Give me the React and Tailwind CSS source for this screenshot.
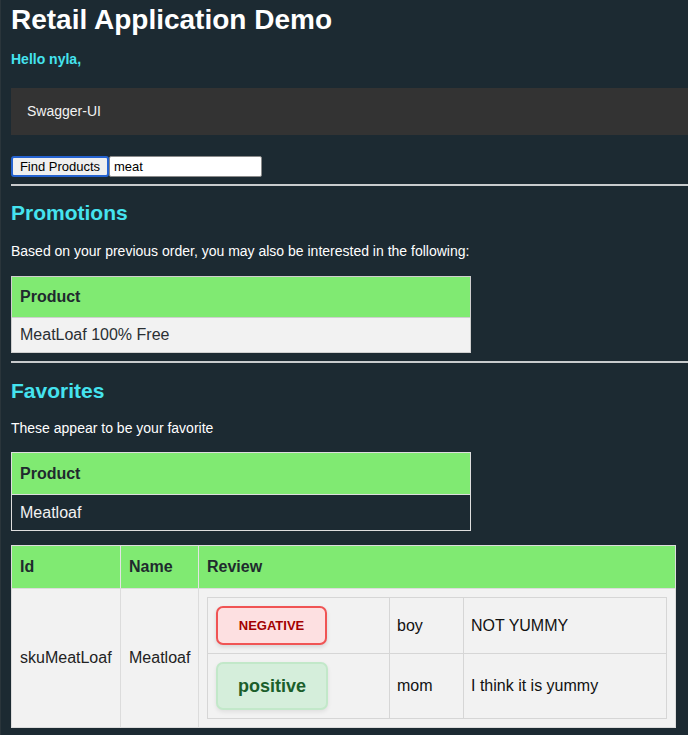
import React, { useState } from 'react';

const green = 'bg-[#80ea72]';

function Badge({ kind }) {
  if (kind === 'negative') {
    return (
      <div className="w-[111px] h-[39px] flex items-center justify-center rounded-[7px] border-2 border-[#f05454] bg-[#fde0e1] text-[#a30000] text-[13px] font-bold shadow-[0_2px_4px_rgba(0,0,0,0.12)]">
        NEGATIVE
      </div>
    );
  }
  return (
    <div className="w-[112px] h-[48px] flex items-center justify-center rounded-[7px] border-2 border-[#c2e8c9] bg-[#d5eedb] text-[#1b5e2b] text-[18px] font-bold shadow-[0_2px_4px_rgba(0,0,0,0.08)]">
      positive
    </div>
  );
}

export default function App() {
  const [query, setQuery] = useState('meat');

  const reviews = [
    { sentiment: 'negative', user: 'boy', text: 'NOT YUMMY', h: 'h-[55px]' },
    { sentiment: 'positive', user: 'mom', text: 'I think it is yummy', h: 'h-[65px]' }
  ];

  return (
    <div className="min-h-screen bg-[#1c2a32] border-l border-[#2a353b] pl-[10px] text-white font-['Liberation_Sans',Arial,sans-serif]">
      <h1 className="pt-[4px] text-[28px] leading-[32px] font-bold text-white">Retail Application Demo</h1>
      <div className="mt-[15px] text-[14px] leading-[16px] font-bold text-[#45e3ef]">Hello nyla,</div>

      <div className="mt-[21px] h-[47px] bg-[#333333] flex items-center pl-[16px] text-[14px] text-[#f2f2f2]">
        Swagger-UI
      </div>

      <div className="mt-[21px] h-[21px] flex">
        <button className="h-[21px] w-[98px] bg-[#efefef] border-2 border-[#2563d1] rounded-[3px] text-[13px] leading-none text-black">
          Find Products
        </button>
        <input
          value={query}
          onChange={e => setQuery(e.target.value)}
          className="h-[21px] w-[153px] bg-white border border-[#8a8a8a] rounded-[2px] px-[4px] text-[13px] text-black outline-none"
        />
      </div>

      <div className="mt-[7px] h-[2px] bg-[#c8cbcd]" />

      <h2 className="mt-[15px] text-[21px] leading-[24px] font-bold text-[#45e3ef]">Promotions</h2>
      <p className="mt-[18px] text-[14px] leading-[16px]">Based on your previous order, you may also be interested in the following:</p>

      <div className="mt-[17px] w-[460px] border border-[#cfcfcf]">
        <div className={`h-[41px] ${green} flex items-center px-[8px] border-b border-[#cfcfcf] text-[16px] font-bold text-[#1f2a2e]`}>Product</div>
        <div className="h-[34px] bg-[#f2f2f2] flex items-center px-[8px] text-[16px] text-[#2a2f33]">MeatLoaf 100% Free</div>
      </div>

      <div className="mt-[8px] h-[2px] bg-[#c8cbcd]" />

      <h2 className="mt-[16px] text-[21px] leading-[24px] font-bold text-[#45e3ef]">Favorites</h2>
      <p className="mt-[17px] text-[14px] leading-[16px]">These appear to be your favorite</p>

      <div className="mt-[16px] w-[460px] border border-[#dedede]">
        <div className={`h-[42px] ${green} flex items-center px-[8px] border-b border-[#dedede] text-[16px] font-bold text-[#1f2a2e]`}>Product</div>
        <div className="h-[35px] flex items-center px-[8px] text-[16px] text-[#f2f2f2]">Meatloaf</div>
      </div>

      <div className="mt-[14px] w-[665px] border border-[#dcdcdc] text-[16px]">
        <div className={`h-[42px] flex ${green} font-bold text-[#1f2a2e]`}>
          <div className="w-[109px] border-r border-[#e4e4e4] flex items-center px-[8px]">Id</div>
          <div className="w-[78px] border-r border-[#e4e4e4] flex items-center px-[8px]">Name</div>
          <div className="flex-1 flex items-center px-[8px]">Review</div>
        </div>
        <div className="flex border-t border-[#dcdcdc] bg-[#f2f2f2] text-[#222]">
          <div className="w-[109px] border-r border-[#dcdcdc] flex items-center px-[8px]">skuMeatLoaf</div>
          <div className="w-[78px] border-r border-[#dcdcdc] flex items-center px-[8px]">Meatloaf</div>
          <div className="flex-1 p-[8px]">
            <div className="w-[460px] border border-[#d6d6d6]">
              {reviews.map((r, i) => (
                <div key={i} className={`flex ${r.h} ${i > 0 ? 'border-t border-[#d6d6d6]' : ''}`}>
                  <div className="w-[182px] border-r border-[#d6d6d6] flex items-center px-[8px]">
                    <Badge kind={r.sentiment} />
                  </div>
                  <div className="w-[74px] border-r border-[#d6d6d6] flex items-center px-[7px] text-[#111]">{r.user}</div>
                  <div className="flex-1 flex items-center px-[7px] text-[#111]">{r.text}</div>
                </div>
              ))}
            </div>
          </div>
        </div>
      </div>
    </div>
  );
}
